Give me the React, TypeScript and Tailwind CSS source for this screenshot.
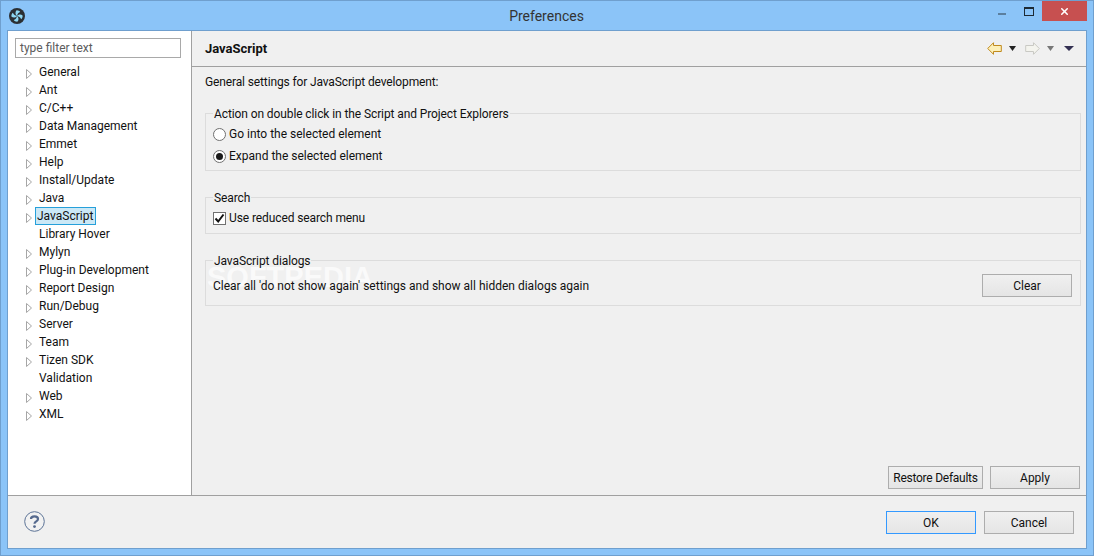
import { X } from 'lucide-react';

const font = { fontFamily: 'Roboto, sans-serif' };

const treeItems = [
  { name: 'General', arrow: true },
  { name: 'Ant', arrow: true },
  { name: 'C/C++', arrow: true },
  { name: 'Data Management', arrow: true },
  { name: 'Emmet', arrow: true },
  { name: 'Help', arrow: true },
  { name: 'Install/Update', arrow: true },
  { name: 'Java', arrow: true },
  { name: 'JavaScript', arrow: true, selected: true },
  { name: 'Library Hover', arrow: false },
  { name: 'Mylyn', arrow: true },
  { name: 'Plug-in Development', arrow: true },
  { name: 'Report Design', arrow: true },
  { name: 'Run/Debug', arrow: true },
  { name: 'Server', arrow: true },
  { name: 'Team', arrow: true },
  { name: 'Tizen SDK', arrow: true },
  { name: 'Validation', arrow: false },
  { name: 'Web', arrow: true },
  { name: 'XML', arrow: true },
];

const TreeArrow = () => (
  <svg width="6" height="10" viewBox="0 0 6 10" className="mt-[3px]">
    <path d="M0.5 0.5 L5.5 5 L0.5 9.5 Z" fill="#fff" stroke="#a6a6a6" />
  </svg>
);

const NavArrow = ({ active }: { active: boolean }) => (
  <svg width="15" height="13" viewBox="0 0 15 13">
    <path
      d={active ? 'M0.7 6.5 L6.5 0.7 V3.5 H14.3 V9.5 H6.5 V12.3 Z' : 'M14.3 6.5 L8.5 0.7 V3.5 H0.7 V9.5 H8.5 V12.3 Z'}
      fill={active ? '#fdf0b8' : '#f4f4ee'}
      stroke={active ? '#c08a1e' : '#c9c9c4'}
      strokeWidth="1"
    />
  </svg>
);

const Caret = ({ color, wide }: { color: string; wide?: boolean }) => (
  <svg width={wide ? 10 : 7} height="5" viewBox={wide ? '0 0 10 5' : '0 0 7 5'}>
    <path d={wide ? 'M0 0 H10 L5 5 Z' : 'M0 0 H7 L3.5 5 Z'} fill={color} />
  </svg>
);

const Btn = ({ label, className }: { label: string; className: string }) => (
  <button className={`h-[23px] border bg-gradient-to-b from-[#f0f0f0] to-[#e5e5e5] text-[12px] text-[#111] leading-none whitespace-nowrap ${className}`}>
    {label}
  </button>
);

const Group = ({ title, className, children }: { title: string; className: string; children: React.ReactNode }) => (
  <fieldset className={`relative border border-[#dcdcdc] pl-[7px] ${className}`}>
    <legend className="px-[1px] pt-[2px] text-[12px] leading-[16px] tracking-[-0.1px] text-[#111]">{title}</legend>
    {children}
  </fieldset>
);

const App = () => {
  return (
    <div style={font} className="w-[1094px] h-[556px] bg-[#8bc4f8] border border-[#6f9fce] flex flex-col overflow-hidden text-[12px] text-[#111]">
      {/* title bar */}
      <div className="h-[29px] shrink-0 flex items-center">
        <div className="ml-[8px] w-4 h-4 rounded-full bg-[#2b2f33] flex items-center justify-center">
          <svg width="14" height="14" viewBox="0 0 14 14">
            <g fill="#8fd8f2">
              <path id="blade" d="M7 7 C5.2 5.6 5 3 6.4 1.4 C8 1.2 9.6 2 10.2 3 C8.6 3.2 7.4 4.8 7 7 Z" />
              <path d="M7 7 C5.2 5.6 5 3 6.4 1.4 C8 1.2 9.6 2 10.2 3 C8.6 3.2 7.4 4.8 7 7 Z" transform="rotate(90 7 7)" />
              <path d="M7 7 C5.2 5.6 5 3 6.4 1.4 C8 1.2 9.6 2 10.2 3 C8.6 3.2 7.4 4.8 7 7 Z" transform="rotate(180 7 7)" />
              <path d="M7 7 C5.2 5.6 5 3 6.4 1.4 C8 1.2 9.6 2 10.2 3 C8.6 3.2 7.4 4.8 7 7 Z" transform="rotate(270 7 7)" />
            </g>
          </svg>
        </div>
        <div className="flex-1 text-center text-[14px] text-[#333] pl-[70px] pt-[2px]">Preferences</div>
        <div className="flex items-start h-[20px] self-start">
          <div className="w-[8px] h-[2px] bg-[#5b7f9f] mt-[12px] mr-[18px]" />
          <div className="w-[10px] h-[9px] mt-[6px] mr-[8px] border border-[#1d2a35] border-t-[2px]" />
          <div className="w-[45px] h-[20px] bg-[#c75050] flex items-center justify-center mr-[6px]">
            <X size={11} strokeWidth={3.4} color="#fff" />
          </div>
        </div>
      </div>

      {/* content */}
      <div className="mx-[6px] flex-1 bg-[#f0f0f0] border border-[#6f9fce] flex flex-col min-h-0">
        <div className="flex flex-1 min-h-0">
          {/* left tree */}
          <div className="w-[184px] shrink-0 bg-white border-r border-[#a0a0a0] pt-[7px] pl-[7px] pr-[10px]">
            <div className="h-[20px] border border-[#a9a9a9] pl-[4px] text-[12px] leading-[18px] text-[#5c5c5c]">type filter text</div>
            <div className="mt-[5px]">
              {treeItems.map((item) => (
                <div key={item.name} className="h-[18px] flex items-center">
                  <div className="w-[24px] pl-[11px] flex justify-start">{item.arrow && <TreeArrow />}</div>
                  {item.selected ? (
                    <span className="h-[18px] border border-[#26a0da] bg-[#cbe8f6] px-[1px] -ml-[4px] pr-[2px] leading-[16px]">{item.name}</span>
                  ) : (
                    <span className="text-[12px]">{item.name}</span>
                  )}
                </div>
              ))}
            </div>
          </div>

          {/* right panel */}
          <div className="flex-1 min-w-0 flex flex-col">
            <div className="h-[36px] shrink-0 border-b border-[#a0a0a0] flex items-center pl-[13px] pr-[12px]">
              <div className="font-bold text-[13px] flex-1">JavaScript</div>
              <div className="flex items-center">
                <NavArrow active />
                <div className="ml-[7px]"><Caret color="#222" /></div>
                <div className="ml-[9px]"><NavArrow active={false} /></div>
                <div className="ml-[7px]"><Caret color="#777" /></div>
                <div className="ml-[10px]"><Caret color="#333052" wide /></div>
              </div>
            </div>

            <div className="pl-[13px] pr-[5px] flex-1 flex flex-col relative">
              <div className="mt-[7px] leading-[16px] tracking-[-0.13px]">General settings for JavaScript development:</div>

              {/* watermark */}
              <div style={{ fontFamily: '"Liberation Sans", sans-serif' }} className="absolute left-[15px] top-[196px] text-[29px] font-bold text-white/70 leading-none pointer-events-none">SOFTPEDIA</div>

              <Group title="Action on double click in the Script and Project Explorers" className="mt-[14px] h-[67px]">
                <div className="flex items-center gap-[3px] h-[22px] mt-[1px]">
                  <span className="w-[13px] h-[13px] rounded-full border border-[#707070] bg-white" />
                  <span>Go into the selected element</span>
                </div>
                <div className="flex items-center gap-[3px] h-[22px]">
                  <span className="w-[13px] h-[13px] rounded-full border border-[#707070] bg-white flex items-center justify-center">
                    <span className="w-[7px] h-[7px] rounded-full bg-[#1a1a1a]" />
                  </span>
                  <span>Expand the selected element</span>
                </div>
              </Group>

              <Group title="Search" className="mt-[17px] h-[46px]">
                <div className="flex items-center gap-[3px] h-[22px] mt-[1px]">
                  <span className="w-[13px] h-[13px] border border-[#707070] bg-white flex items-center justify-center">
                    <svg width="11" height="11" viewBox="0 0 11 11">
                      <path d="M1.5 5.5 L4.2 8.5 L9.5 1.5" fill="none" stroke="#111" strokeWidth="2" />
                    </svg>
                  </span>
                  <span className="tracking-[-0.1px]">Use reduced search menu</span>
                </div>
              </Group>

              <Group title="JavaScript dialogs" className="mt-[17px] h-[55px] pr-[8px]">
                <div className="flex items-center justify-between h-[23px] mt-[5px]">
                  <span>Clear all 'do not show again' settings and show all hidden dialogs again</span>
                  <Btn label="Clear" className="w-[90px] border-[#adadad]" />
                </div>
              </Group>

              <div className="mt-auto mb-[6px] mr-[1px] flex justify-end gap-[7px]">
                <Btn label="Restore Defaults" className="w-[95px] border-[#adadad] tracking-[-0.25px]" />
                <Btn label="Apply" className="w-[90px] border-[#adadad]" />
              </div>
            </div>
          </div>
        </div>

        {/* footer */}
        <div className="h-[53px] shrink-0 border-t border-[#a0a0a0] flex items-center">
          <svg width="21" height="21" viewBox="0 0 21 21" className="ml-[16px] mb-[2px]">
            <circle cx="10.5" cy="10.5" r="9.8" fill="#f2f2f2" stroke="#5c7396" strokeWidth="1" />
            <path d="M7 8 C7 4.5 14 4.5 14 8 C14 10.5 10.5 10.2 10.5 12.8" fill="none" stroke="#566a8e" strokeWidth="2.2" />
            <circle cx="10.5" cy="15.6" r="1.4" fill="#566a8e" />
          </svg>
          <div className="ml-auto mr-[12px] flex gap-[8px] mt-[1px]">
            <Btn label="OK" className="w-[90px] border-[#3399ff]" />
            <Btn label="Cancel" className="w-[90px] border-[#adadad]" />
          </div>
        </div>
      </div>
      <div className="h-[6px] shrink-0" />
    </div>
  );
};

export default App;
